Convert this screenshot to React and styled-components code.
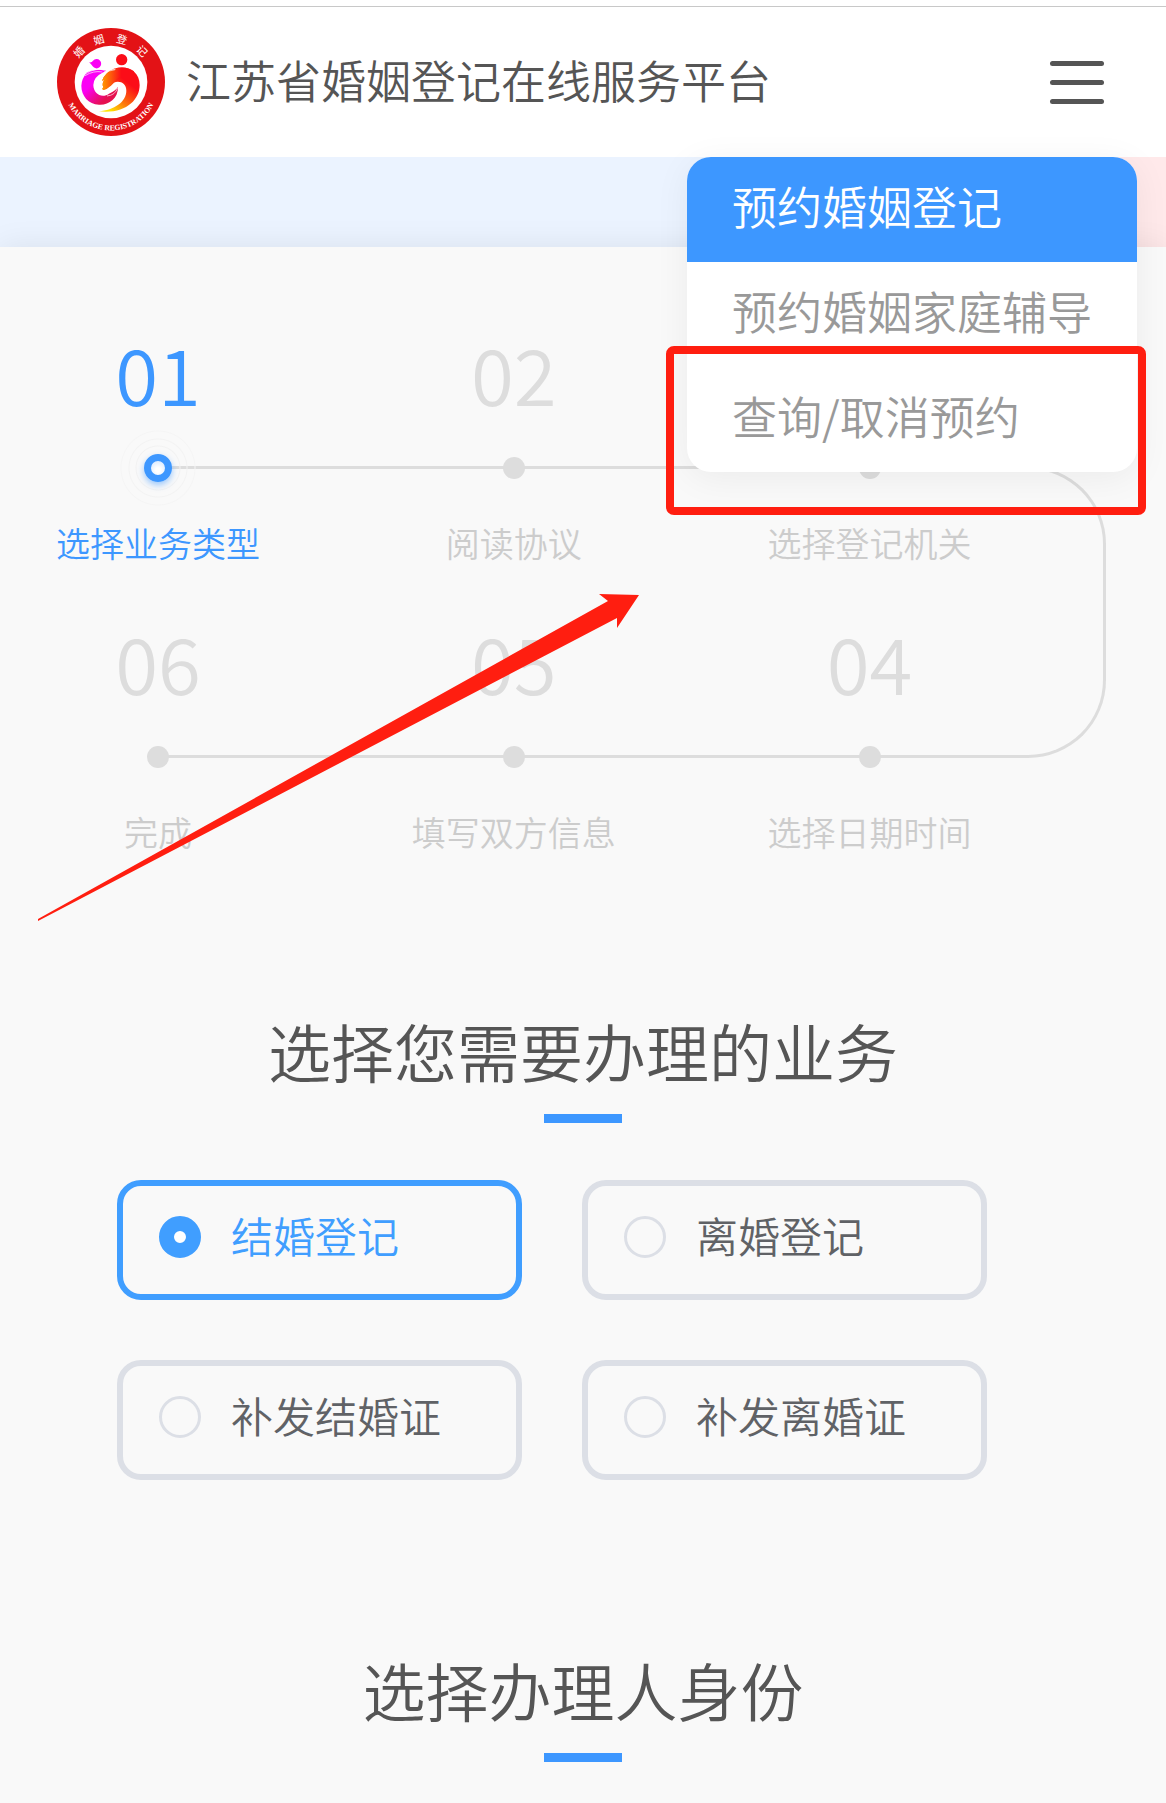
import React, { useState } from 'react';
import styled, { createGlobalStyle } from 'styled-components';

const GlobalStyle = createGlobalStyle`
  * {
    box-sizing: border-box;
  }
  body {
    margin: 0;
    background: #f9f9f9;
    color: #555;
    font-family: "Noto Sans CJK SC", "Noto Sans", sans-serif;
    font-weight: 350;
  }
  h1, h2, p, ol, ul {
    margin: 0;
    padding: 0;
    font-weight: inherit;
    list-style: none;
  }
`
const Page = styled.div`
  position: relative;
  overflow: hidden;
`
const TopRule = styled.div`
  height: 7px;
  background: #fff;
  border-bottom: 1px solid #c8c8c8;
`
const Header = styled.header`
  position: relative;
  z-index: 2;
  display: flex;
  align-items: center;
  height: 150px;
  padding: 0 62px 0 57px;
  background: #fff;
`
const Logo = styled.svg`
  flex: none;
  width: 108px;
  height: 108px;
  margin-right: 21px;
`
const SiteName = styled.h1`
  flex: 1;
  padding-bottom: 4px;
  font-size: 45px;
  line-height: 66px;
  white-space: nowrap;
`
const MenuButton = styled.button`
  display: flex;
  flex-direction: column;
  gap: 14px;
  width: 54px;
  padding: 0;
  border: 0;
  background: none;
  cursor: pointer;
  span {
    height: 5px;
    border-radius: 3px;
    background: #555;
  }
`
const Menu = styled.nav`
  position: absolute;
  top: 100%;
  right: 29px;
  width: 450px;
  border-radius: 24px;
  background: #fff;
  box-shadow: 0 6px 36px rgba(0, 0, 0, 0.06);
`
const MenuLink = styled.a`
  display: block;
  height: 105px;
  padding: 0 45px;
  border-radius: ${({$active}) => ($active ? '24px 24px 0 0' : '0')};
  background: ${({$active}) => ($active ? '#3d97ff' : 'transparent')};
  color: ${({$active}) => ($active ? '#fff' : '#999')};
  font-size: 45px;
  line-height: 98px;
  text-decoration: none;
  white-space: nowrap;
`
const Highlight = styled.div`
  position: absolute;
  top: 189px;
  left: -21px;
  right: -9px;
  height: 169px;
  border: 8px solid #ff1e10;
  border-radius: 8px;
  pointer-events: none;
`
const Banner = styled.div`
  height: 90px;
  background: linear-gradient(90deg, #ebf3ff 0%, #ebf3ff 60%, #ffe9ea 96%);
`
const Main = styled.main`
  padding: 81px 0 41px;
  background: #f9f9f9;
  box-shadow: 0 0 30px rgba(0, 0, 0, 0.08);
`
const Steps = styled.ol`
  display: grid;
  grid-template-columns: 16fr 20fr 16fr 7fr;
  row-gap: 51px;
`
const Track = styled.li`
  grid-area: 1 / 1 / 3 / 5;
  margin: 138px 60px 97px 13.6%;
  border: 3px solid #ddd;
  border-left: 0;
  border-radius: 0 78px 78px 0;
`
const Step = styled.li`
  grid-row: ${({$row}) => $row};
  grid-column: ${({$col}) => $col};
  z-index: 1;
  display: flex;
  flex-direction: column;
  align-items: center;
  color: ${({$active}) => ($active ? '#3d97ff' : '#ccc')};
`
const StepNumber = styled.span`
  margin-bottom: 12px;
  visibility: ${({$covered}) => ($covered ? 'hidden' : 'visible')};
  color: ${({$active}) => ($active ? '#3d97ff' : '#ddd')};
  font-size: 78px;
  line-height: 88px;
`
const MarkerBox = styled.span`
  display: flex;
  align-items: center;
  justify-content: center;
  width: 80px;
  height: 80px;
  background: ${({$active}) => ($active
    ? `radial-gradient(circle,
        transparent 21px, #f2f2f2 22px, transparent 23px,
        transparent 28px, #f3f3f3 29px, transparent 30px,
        transparent 36px, #f5f5f5 37px, transparent 38px)`
    : 'none')};
`
const Dot = styled.span`
  width: 22px;
  height: 22px;
  border-radius: 50%;
  background: #ddd;
`
const ActiveDot = styled.span`
  width: 28px;
  height: 28px;
  border: 7px solid #3d97ff;
  border-radius: 50%;
  background: radial-gradient(circle at 50% 65%, #fff 20%, #cfe4ff 100%);
  box-shadow: 0 3px 6px rgba(61, 151, 255, 0.5);
`
const StepLabel = styled.span`
  margin-top: 12px;
  font-size: 34px;
  line-height: 46px;
  white-space: nowrap;
`
const Section = styled.section`
  margin-top: ${({$gap}) => $gap}px;
`
const SectionTitle = styled.h2`
  display: flex;
  flex-direction: column;
  align-items: center;
  gap: 21px;
  font-size: 63px;
  line-height: 86px;
  &::after {
    content: '';
    width: 78px;
    height: 9px;
    background: #3d97ff;
  }
`
const Options = styled.div`
  display: grid;
  grid-template-columns: 1fr 1fr;
  gap: 60px;
  margin: 57px 179px 0 117px;
`
const Option = styled.label`
  display: flex;
  gap: 30px;
  height: 120px;
  padding: 30px 36px;
  border: 6px solid ${({$checked}) => ($checked ? '#409eff' : '#dcdfe6')};
  border-radius: 24px;
  color: ${({$checked}) => ($checked ? '#409eff' : '#606266')};
  font-size: 42px;
  line-height: 38px;
  white-space: nowrap;
  cursor: pointer;
`
const Radio = styled.input`
  appearance: none;
  flex: none;
  width: 42px;
  height: 42px;
  margin: 0;
  border: 3px solid #dcdfe6;
  border-radius: 50%;
  &:checked {
    border: 15px solid #409eff;
    background: #fff;
  }
`
const Arrow = styled.svg`
  position: absolute;
  top: 594px;
  left: 38px;
  z-index: 3;
  width: 602px;
  height: 328px;
  pointer-events: none;
`

const menuItems = ['预约婚姻登记', '预约婚姻家庭辅导', '查询/取消预约'];

// covered: the open menu lies over this number
const steps = [
  { number: '01', label: '选择业务类型', row: 1, col: 1, active: true },
  { number: '02', label: '阅读协议', row: 1, col: 2 },
  { number: '03', label: '选择登记机关', row: 1, col: 3, covered: true },
  { number: '04', label: '选择日期时间', row: 2, col: 3 },
  { number: '05', label: '填写双方信息', row: 2, col: 2 },
  { number: '06', label: '完成', row: 2, col: 1 },
];

const services = ['结婚登记', '离婚登记', '补发结婚证', '补发离婚证'];

function Emblem () {
  return (
    <Logo viewBox="0 0 324 324" role="img" aria-label="婚姻登记">
      <defs>
        <linearGradient id="her" x1="0" y1="0" x2="1" y2="1">
          <stop offset="0.35" stopColor="#fb00f5" />
          <stop offset="0.75" stopColor="#e5104f" />
        </linearGradient>
        <linearGradient id="him" x1="0.85" y1="0.1" x2="0.2" y2="1">
          <stop offset="0.25" stopColor="#fb0d18" />
          <stop offset="0.65" stopColor="#fd7a0c" />
          <stop offset="0.95" stopColor="#ffe500" />
        </linearGradient>
        <linearGradient id="arm" x1="0" y1="0" x2="1" y2="0">
          <stop offset="0" stopColor="#ff9d00" />
          <stop offset="0.6" stopColor="#fb0d18" />
        </linearGradient>
        <path id="upper" d="M42 162a120 120 0 0 1 240 0" />
        <path id="lower" d="M17 162a145 145 0 0 0 290 0" />
      </defs>
      <circle cx="162" cy="162" r="162" fill="#e31216" />
      <circle cx="162" cy="162" r="109" fill="#fff" />
      <g fill="#fff" fontSize="32" fontWeight="400" fontFamily='"Noto Sans CJK SC", sans-serif' textAnchor="middle">
        <text><textPath href="#upper" startOffset="24%">婚</textPath></text>
        <text><textPath href="#upper" startOffset="41%">姻</textPath></text>
        <text><textPath href="#upper" startOffset="58%">登</textPath></text>
        <text><textPath href="#upper" startOffset="75%">记</textPath></text>
      </g>
      <text fill="#fff" fontSize="23" fontFamily='"Liberation Serif", serif' fontWeight="bold" textAnchor="middle">
        <textPath href="#lower" startOffset="50%">MARRIAGE REGISTRATION</textPath>
      </text>
      <path d="M96 103q8 2 12-5a14 14 0 1 1-1 17q-5-8-11-12z" fill="#fb00f5" />
      <circle cx="194" cy="95" r="17" fill="#fb0d18" />
      <path d="M90 133q24-13 58-5l-13 7q-25 12-26 36c0 26 26 42 47 26q22-10 27-21c1 36-29 56-57 54-32-1-53-27-53-57q1-21 17-40z" fill="url(#her)" />
      <path d="M86 137q28-18 56-11M84 143q26-16 52-11" fill="none" stroke="#fff" strokeWidth="2" />
      <path d="M138 186q-5-4 1-8-6-11 3-22l-7 2q10-26 36-36c40-12 77 8 77 49 0 46-44 88-122 79 45-4 82-28 82-62 0-28-32-35-49-15q-10 13-21 13z" fill="url(#him)" />
      <path d="M135 158q10-26 36-36 38-10 60 8l-9 34c-8-20-34-22-47-7q-7 18-37 29-4-4 1-8-5-10 3-22z" fill="url(#arm)" />
      <path d="M150 204q25-2 32-25M142 131q16-8 34-8M138 139q18-13 36-14" fill="none" stroke="#fff" strokeWidth="2" />
    </Logo>
  )
}

export default function App () {
  const [service, setService] = useState(services[0]);

  return (
    <Page>
      <GlobalStyle />
      <TopRule />
      <Header>
        <Emblem />
        <SiteName>江苏省婚姻登记在线服务平台</SiteName>
        <MenuButton type="button" aria-label="菜单">
          <span />
          <span />
          <span />
        </MenuButton>
        <Menu>
          {menuItems.map((item, i) => (
            <MenuLink key={item} href="#" $active={i === 0}>{item}</MenuLink>
          ))}
          <Highlight />
        </Menu>
      </Header>
      <Banner />
      <Main>
        <Steps>
          <Track aria-hidden="true" />
          {steps.map(({ number, label, row, col, active, covered }) => (
            <Step key={number} $row={row} $col={col} $active={active}>
              <StepNumber $active={active} $covered={covered}>{number}</StepNumber>
              <MarkerBox $active={active}>{active ? <ActiveDot /> : <Dot />}</MarkerBox>
              <StepLabel>{label}</StepLabel>
            </Step>
          ))}
        </Steps>
        <Section $gap={152}>
          <SectionTitle>选择您需要办理的业务</SectionTitle>
          <Options>
            {services.map((name) => (
              <Option key={name} $checked={service === name}>
                <Radio
                  type="radio"
                  name="service"
                  checked={service === name}
                  onChange={() => setService(name)}
                />
                {name}
              </Option>
            ))}
          </Options>
        </Section>
        <Section $gap={166}>
          <SectionTitle>选择办理人身份</SectionTitle>
        </Section>
      </Main>
      <Arrow viewBox="0 0 602 328" aria-hidden="true">
        <path d="M0 325L570 7l-9-7 40 1-22 33v-10L0 327z" fill="#ff1e10" />
      </Arrow>
    </Page>
  )
}
